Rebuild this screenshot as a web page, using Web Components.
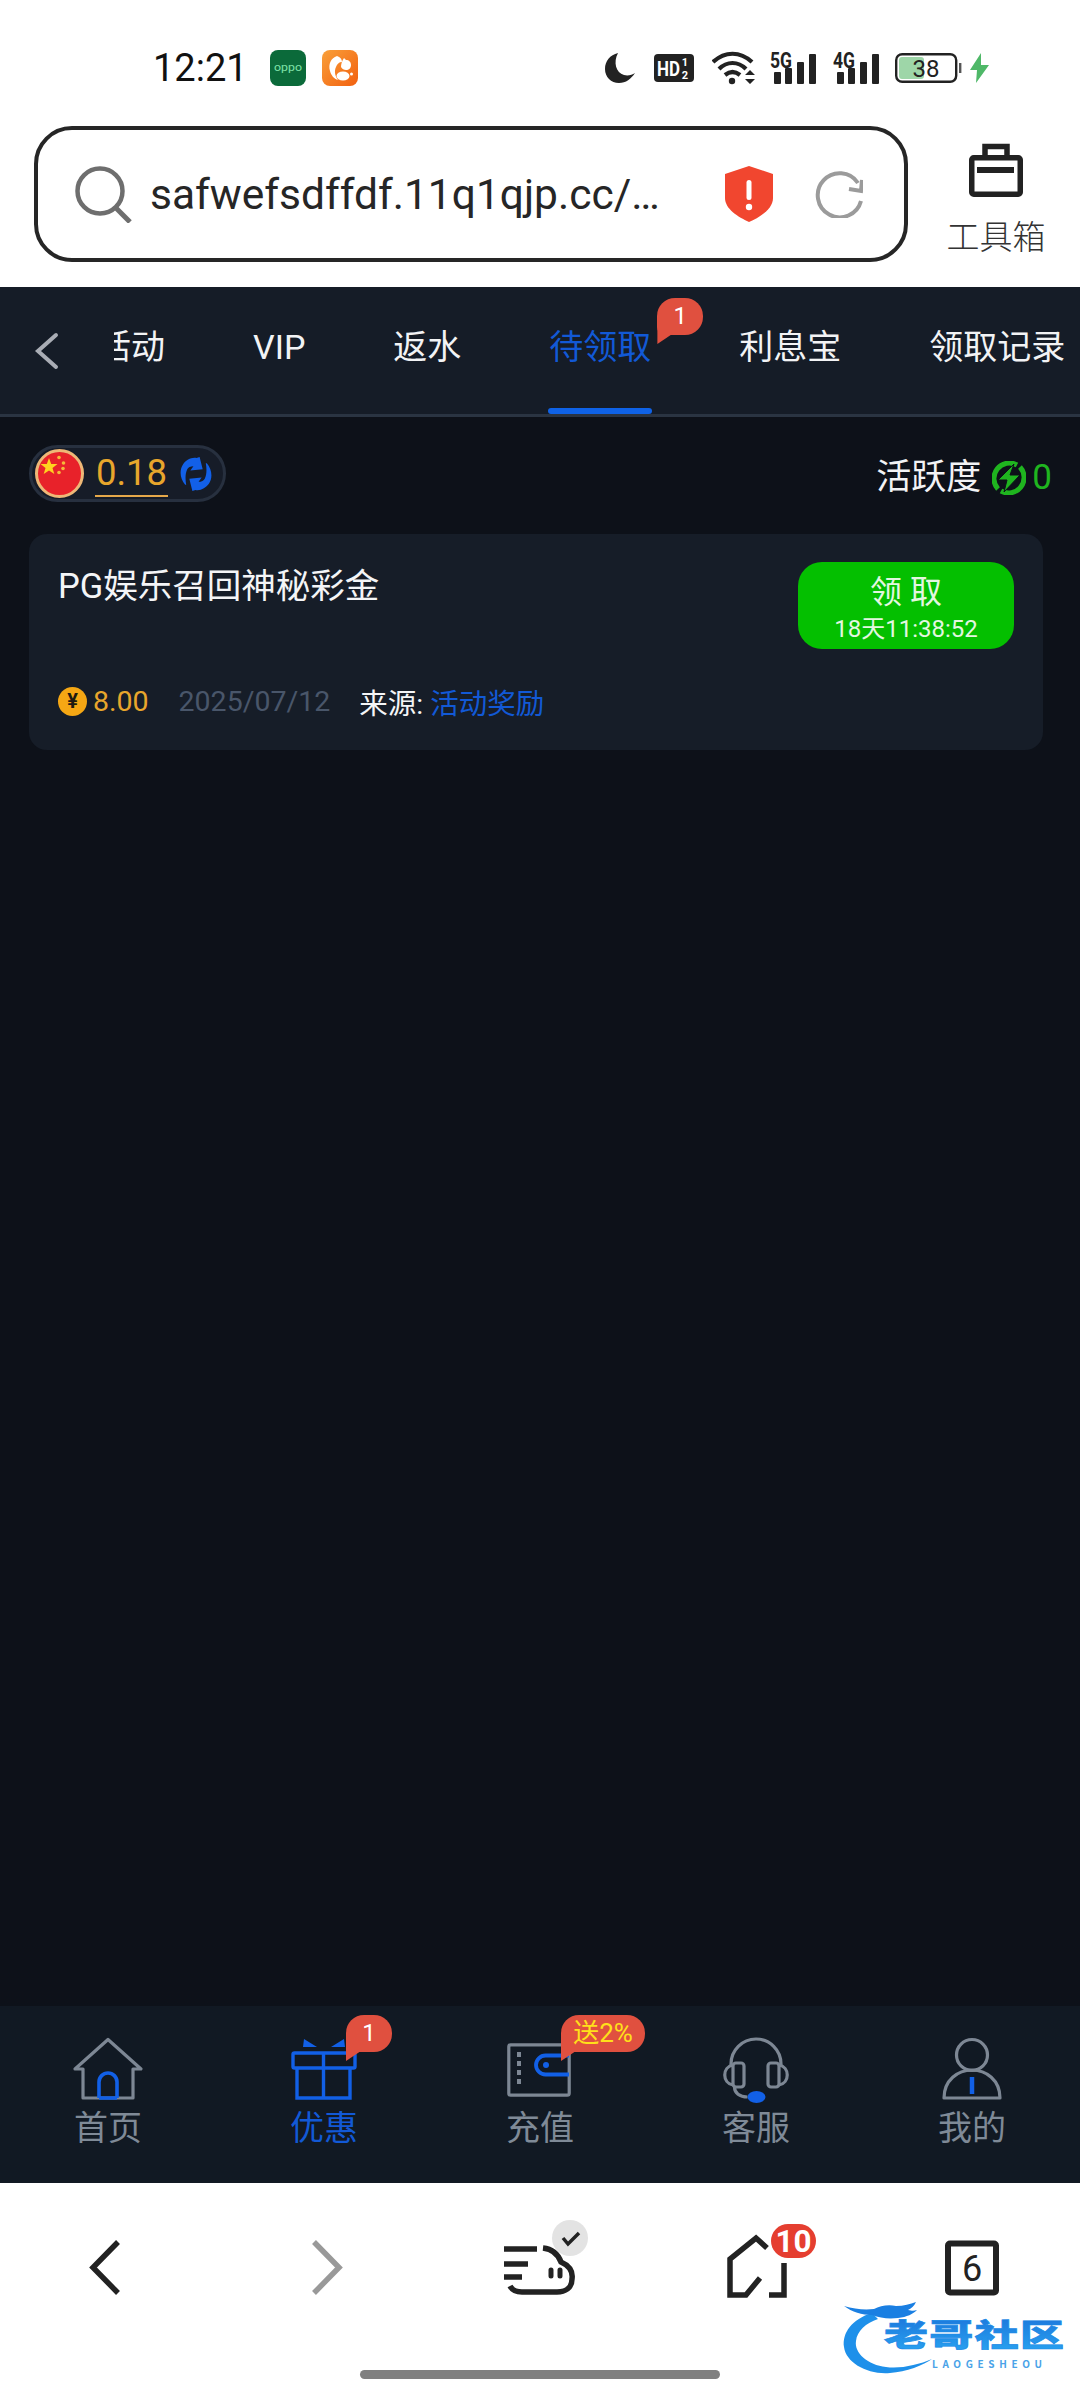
<!DOCTYPE html>
<html lang="zh">
<head>
<meta charset="utf-8">
<title>待领取</title>
<style>
	html, body {
		margin: 0;
		width: 1080px;
		height: 2400px;
		overflow: hidden;
		background: #fff;
		font-family: Roboto, "Noto Sans CJK SC", sans-serif;
	}
	body {
		display: flex;
		flex-direction: column;
	}
</style>
</head>
<body>
	<status-bar></status-bar>
	<url-bar url="safwefsdffdf.11q1qjp.cc/…"></url-bar>
	<promo-tabs>
		<tab-item>活动</tab-item>
		<tab-item>VIP</tab-item>
		<tab-item>返水</tab-item>
		<tab-item active>待领取<speech-badge slot="badge" style="left:108px;top:11px;width:46px">1</speech-badge></tab-item>
		<tab-item>利息宝</tab-item>
		<tab-item>领取记录</tab-item>
	</promo-tabs>
	<promo-page>
		<balance-pill slot="left" amount="0.18"></balance-pill>
		<activity-meter slot="right" value="0"></activity-meter>
		<reward-card title="PG娱乐召回神秘彩金" amount="8.00" date="2025/07/12" source="活动奖励" timer="18天11:38:52"></reward-card>
	</promo-page>
	<app-nav></app-nav>
	<browser-toolbar></browser-toolbar>

<script>
class StatusBar extends HTMLElement {
	connectedCallback() {
		this.attachShadow({ mode: 'open' });
		this.shadowRoot.innerHTML = `
			<style>
				:host {
					display: flex;
					align-items: center;
					justify-content: space-between;
					box-sizing: border-box;
					height: 126px;
					padding: 10px 91px 0 153px;
					background: #fff;
				}
				.left, .right {
					display: flex;
					align-items: center;
				}
				.time {
					font-size: 38px;
					color: #111;
					margin-right: 22px;
				}
				svg {
					display: block;
					flex-shrink: 0;
				}
				text {
					font-family: Roboto, sans-serif;
				}
			</style>
			<div class="left">
				<span class="time">12:21</span>
				<svg width="36" height="36" viewBox="0 0 36 36">
					<rect width="36" height="36" rx="8" fill="#0b6a3a"/>
					<text x="18" y="21" font-size="10" fill="#7fe3a8" text-anchor="middle" textLength="28" lengthAdjust="spacingAndGlyphs">oppo</text>
				</svg>
				<svg width="36" height="36" viewBox="0 0 36 36" style="margin-left:16px">
					<defs>
						<linearGradient id="uc" x1="0" y1="0" x2="1" y2="1">
							<stop offset="0" stop-color="#f9a03a"/>
							<stop offset="1" stop-color="#f2600f"/>
						</linearGradient>
					</defs>
					<rect width="36" height="36" rx="8" fill="url(#uc)"/>
					<path d="M15 6C9 8 6 14 8 21c1 4 4 8 8 9-3-4-4-9-2-13 1-3 3-5 6-5 0-3-2-5-5-6z" fill="#fff"/>
					<path d="M22 8l2 2c3 0 5 2 5 5 0 3-2 5-5 5-2 0-4-1-5-3 0-3 1-6 3-9z" fill="#fff"/>
					<ellipse cx="21" cy="26" rx="6.500" ry="4.500" fill="#fff"/>
					<circle cx="29.500" cy="24" r="1.500" fill="#fff"/>
				</svg>
			</div>
			<div class="right">
				<svg width="30" height="30" viewBox="0 0 30 30">
					<path d="M13 0C5 2 0 8 0 16c0 8 6 14 14 14 7 0 12-4 16-10-3 2-7 3-11 2C11 20 8 9 13 0z" fill="#222"/>
				</svg>
				<svg width="40" height="28" viewBox="0 0 40 28" style="margin-left:19px">
					<rect width="40" height="28" rx="4" fill="#222"/>
					<text x="3" y="22" font-size="21" font-weight="700" fill="#fff" textLength="23" lengthAdjust="spacingAndGlyphs">HD</text>
					<text x="31" y="12" font-size="11" font-weight="700" fill="#fff" text-anchor="middle">1</text>
					<text x="31" y="25" font-size="11" font-weight="700" fill="#fff" text-anchor="middle">2</text>
				</svg>
				<svg width="44" height="34" viewBox="0 0 44 34" style="margin-left:18px">
					<path d="M1 11C13 0 28 0 40 11M7 18c8-8 19-8 27 0M13 24c5-4 10-4 15 0" fill="none" stroke="#222" stroke-width="4.200"/>
					<circle cx="20" cy="30" r="3.200" fill="#222"/>
					<path d="M33 24l5-5 5 5zM33 28l5 5 5-5z" fill="#222"/>
				</svg>
				<svg width="46" height="44" viewBox="0 -6 46 44" style="margin-left:14px">
					<text x="0" y="16" font-size="22" font-weight="700" fill="#222" textLength="22" lengthAdjust="spacingAndGlyphs">5G</text>
					<rect x="4" y="20" width="7" height="12" rx="1" fill="#222"/>
					<rect x="15" y="16" width="7" height="16" rx="1" fill="#222"/>
					<rect x="27" y="10" width="7" height="22" rx="1" fill="#222"/>
					<rect x="39" y="2" width="7" height="30" rx="1" fill="#222"/>
				</svg>
				<svg width="46" height="44" viewBox="0 -6 46 44" style="margin-left:17px">
					<text x="0" y="16" font-size="22" font-weight="700" fill="#222" textLength="22" lengthAdjust="spacingAndGlyphs">4G</text>
					<rect x="4" y="20" width="7" height="12" rx="1" fill="#222"/>
					<rect x="15" y="16" width="7" height="16" rx="1" fill="#222"/>
					<rect x="27" y="10" width="7" height="22" rx="1" fill="#222"/>
					<rect x="39" y="2" width="7" height="30" rx="1" fill="#222"/>
				</svg>
				<svg width="67" height="30" viewBox="0 0 67 30" style="margin-left:16px">
					<rect x="4" y="4" width="25" height="22" rx="3" fill="#9ed6a8"/>
					<rect x="1.200" y="1.200" width="60" height="27.600" rx="6" fill="none" stroke="#222" stroke-width="2.400"/>
					<rect x="64" y="10" width="2.400" height="10" fill="#555"/>
					<text x="31" y="24" font-size="24" fill="#222" text-anchor="middle">38</text>
				</svg>
				<svg width="19" height="30" viewBox="0 0 19 30" style="margin-left:8px">
					<path d="M11 0L0 17h7L6 30l13-18h-8z" fill="#4fb868"/>
				</svg>
			</div>
		`;
	}
}
customElements.define('status-bar', StatusBar);

class UrlBar extends HTMLElement {
	connectedCallback() {
		this.attachShadow({ mode: 'open' });
		this.shadowRoot.innerHTML = `
			<style>
				:host {
					display: flex;
					height: 161px;
					box-sizing: border-box;
					padding-left: 34px;
					background: #fff;
				}
				.box {
					display: flex;
					align-items: center;
					box-sizing: border-box;
					width: 874px;
					height: 136px;
					padding: 0 41px 0 37px;
					border: 4.5px solid #262626;
					border-radius: 38px;
				}
				.url {
					margin-left: 18px;
					font-size: 42.5px;
					color: #262626;
					white-space: nowrap;
				}
				svg {
					display: block;
					flex-shrink: 0;
				}
				.tool {
					flex: 1;
					display: flex;
					flex-direction: column;
					align-items: center;
					padding-top: 17px;
					margin-left: 4px;
				}
				.tool span {
					margin-top: 23px;
					font-size: 33px;
					line-height: 36px;
					font-weight: 300;
					color: #333;
				}
			</style>
			<div class="box">
				<svg width="57" height="57" viewBox="0 0 57 57" fill="none" stroke="#6e6e6e">
					<circle cx="25" cy="25" r="22.500" stroke-width="4.500"/>
					<path d="M41 42l14 14" stroke-width="5"/>
				</svg>
				<span class="url">${this.getAttribute('url')}</span>
				<svg width="48" height="56" viewBox="0 0 48 56" style="margin-left:auto">
					<path d="M24 0l24 8v24c0 11-13 19-24 24C13 51 0 43 0 32V8z" fill="#f1462f"/>
					<rect x="21.500" y="14" width="5" height="20" rx="2.500" fill="#fff"/>
					<circle cx="24" cy="41" r="3.200" fill="#fff"/>
				</svg>
				<svg width="48" height="48" viewBox="0 0 48 48" fill="none" stroke="#9b9b9b" stroke-width="4" style="margin-left:42px">
					<path d="M46 31A22 22 0 1 1 43 13"/>
					<path d="M34 19l12 2 1-11"/>
				</svg>
			</div>
			<div class="tool">
				<svg width="54" height="54" viewBox="0 0 54 54" fill="none" stroke="#222" stroke-width="5.500">
					<rect x="2.750" y="14.750" width="48.500" height="36.500" rx="2"/>
					<path d="M16 14V3.500h22V14"/>
					<rect x="8" y="24" width="37" height="6" fill="#222" stroke="none"/>
				</svg>
				<span>工具箱</span>
			</div>
		`;
	}
}
customElements.define('url-bar', UrlBar);

class SpeechBadge extends HTMLElement {
	connectedCallback() {
		this.attachShadow({ mode: 'open' });
		this.shadowRoot.innerHTML = `
			<style>
				:host {
					position: absolute;
					display: block;
					box-sizing: border-box;
					height: 37px;
					border-radius: 18px 18px 18px 8px;
					background: #e0503f;
					color: #fff;
					font-size: 24px;
					line-height: 36px;
					text-align: center;
					white-space: nowrap;
				}
				:host::after {
					content: "";
					position: absolute;
					left: 0;
					top: 22px;
					width: 16px;
					height: 24px;
					background: #e0503f;
					clip-path: polygon(0 0, 100% 0, 100% 55%, 0 100%);
				}
				span {
					position: relative;
					z-index: 1;
				}
			</style>
			<span><slot></slot></span>
		`;
	}
}
customElements.define('speech-badge', SpeechBadge);

class PromoTabs extends HTMLElement {
	connectedCallback() {
		this.attachShadow({ mode: 'open' });
		this.shadowRoot.innerHTML = `
			<style>
				:host {
					display: flex;
					box-sizing: border-box;
					height: 130px;
					background: #151c27;
					border-bottom: 3px solid #2a3442;
				}
				.back {
					flex: 0 0 114px;
					display: flex;
					align-items: center;
					padding-left: 34px;
					box-sizing: border-box;
				}
				.strip {
					flex: 1;
					overflow: hidden;
				}
				.inner {
					display: flex;
					gap: 88px;
					margin-left: -17px;
				}
			</style>
			<div class="back">
				<svg width="26" height="38" viewBox="0 0 26 38" fill="none" stroke="#a9adb5" stroke-width="4" stroke-linecap="round">
					<path d="M22 3L4 19l18 16"/>
				</svg>
			</div>
			<div class="strip"><div class="inner"><slot></slot></div></div>
		`;
	}
}
customElements.define('promo-tabs', PromoTabs);

class TabItem extends HTMLElement {
	connectedCallback() {
		this.attachShadow({ mode: 'open' });
		this.shadowRoot.innerHTML = `
			<style>
				:host {
					position: relative;
					display: block;
					flex-shrink: 0;
					box-sizing: border-box;
					height: 127px;
					padding-top: 38px;
					font-size: 34px;
					line-height: 44px;
					color: #f2f3f5;
					white-space: nowrap;
				}
				:host([active]) {
					color: #1259d6;
				}
				:host([active])::after {
					content: "";
					position: absolute;
					left: -1px;
					right: -1px;
					bottom: 0;
					height: 6px;
					border-radius: 3px;
					background: #0f62e6;
				}
			</style>
			<slot></slot><slot name="badge"></slot>
		`;
	}
}
customElements.define('tab-item', TabItem);

class PromoPage extends HTMLElement {
	connectedCallback() {
		this.attachShadow({ mode: 'open' });
		this.shadowRoot.innerHTML = `
			<style>
				:host {
					display: block;
					flex: 1;
					box-sizing: border-box;
					padding: 28px 37px 0 29px;
					background: #0d1119;
				}
				.head {
					display: flex;
					align-items: center;
					justify-content: space-between;
					height: 57px;
					margin-bottom: 32px;
				}
			</style>
			<div class="head">
				<slot name="left"></slot>
				<slot name="right"></slot>
			</div>
			<slot></slot>
		`;
	}
}
customElements.define('promo-page', PromoPage);

class BalancePill extends HTMLElement {
	connectedCallback() {
		this.attachShadow({ mode: 'open' });
		this.shadowRoot.innerHTML = `
			<style>
				:host {
					display: flex;
					align-items: center;
					box-sizing: border-box;
					width: 197px;
					height: 57px;
					padding-left: 3px;
					border: 3px solid #27303f;
					border-radius: 29px;
					background: #161c28;
				}
				svg {
					display: block;
					flex-shrink: 0;
				}
				.amount {
					margin-left: 11px;
					width: 73px;
					height: 44px;
					border-bottom: 2.5px solid #e5a84a;
					font-size: 36.5px;
					line-height: 44px;
					color: #e8a62c;
					text-align: center;
				}
			</style>
			<svg width="49" height="49" viewBox="0 0 49 49">
				<circle cx="24.500" cy="24.500" r="23" fill="#e8222a" stroke="#eeb877" stroke-width="3"/>
				<polygon points="14,9 16.200,15 22.500,15 17.500,19 19.300,25 14,21.500 8.700,25 10.500,19 5.500,15 11.800,15" fill="#ffd21f"/>
				<circle cx="24" cy="8.500" r="1.800" fill="#f6b93a"/>
				<circle cx="28.500" cy="14" r="1.800" fill="#f6b93a"/>
				<circle cx="28" cy="19.500" r="1.800" fill="#f6b93a"/>
				<circle cx="24" cy="23.500" r="1.800" fill="#f6b93a"/>
			</svg>
			<div class="amount">${this.getAttribute('amount')}</div>
			<svg width="32" height="34" viewBox="0 0 31 33" style="margin-left:12px" fill="#1260e8">
				<path d="M5 27C0 21-1 13 3 7c3-4 8-7 13-6l3-1 3 12-12 1 3-4c-3 0-5 1-6 3-2 4-2 10-1 15z"/>
				<path d="M26 6c5 6 6 14 2 20-3 4-8 7-13 6l-3 1-3-12 12-1-3 4c3 0 5-1 6-3 2-4 2-10 1-15z"/>
			</svg>
		`;
	}
}
customElements.define('balance-pill', BalancePill);

class ActivityMeter extends HTMLElement {
	connectedCallback() {
		this.attachShadow({ mode: 'open' });
		this.shadowRoot.innerHTML = `
			<style>
				:host {
					display: flex;
					align-items: center;
					margin-top: 9px;
					margin-right: -9px;
					font-size: 35px;
					line-height: 44px;
					color: #f2f3f5;
				}
				svg {
					display: block;
					margin-left: 11px;
				}
				.value {
					margin-left: 6px;
					font-size: 35px;
					color: #1fb51f;
				}
			</style>
			活跃度
			<svg width="34" height="34" viewBox="0 0 34 34" fill="none">
				<path d="M6 28A15.500 15.500 0 0 1 25 4M28 6A15.500 15.500 0 0 1 9 30" stroke="#1fb51f" stroke-width="5"/>
				<path d="M22 3L6 19h9l-3 12 16-17h-10z" fill="#1fb51f" stroke="#0d1119" stroke-width="1"/>
			</svg>
			<span class="value">${this.getAttribute('value')}</span>
		`;
	}
}
customElements.define('activity-meter', ActivityMeter);

class RewardCard extends HTMLElement {
	connectedCallback() {
		this.attachShadow({ mode: 'open' });
		this.shadowRoot.innerHTML = `
			<style>
				:host {
					display: block;
					box-sizing: border-box;
					height: 216px;
					padding: 28px 29px 28px 29px;
					border-radius: 18px;
					background: #161d28;
				}
				.top {
					display: flex;
					align-items: flex-start;
					justify-content: space-between;
				}
				.title {
					margin-top: 2px;
					font-size: 34.5px;
					line-height: 44px;
					color: #f4f5f7;
				}
				.claim {
					display: flex;
					flex-direction: column;
					align-items: center;
					box-sizing: border-box;
					width: 216px;
					height: 87px;
					padding-top: 8px;
					border-radius: 24px;
					background: #04bf00;
					color: #e3f7e0;
				}
				.claim b {
					font-weight: 400;
					font-size: 32px;
					line-height: 44px;
				}
				.claim small {
					font-size: 24px;
					line-height: 30px;
				}
				.meta {
					display: flex;
					align-items: center;
					height: 40px;
					margin-top: 32px;
					font-size: 28.5px;
					white-space: nowrap;
				}
				.coin {
					display: flex;
					align-items: center;
					justify-content: center;
					width: 29px;
					height: 29px;
					margin-right: 6px;
					border-radius: 50%;
					background: #f5a714;
					color: #1d1a10;
					font-size: 20px;
					font-weight: 700;
				}
				.amount {
					color: #e8a62c;
					margin-right: 30px;
				}
				.date {
					color: #49566a;
					margin-right: 29px;
				}
				.source {
					color: #f4f5f7;
				}
				.source em {
					font-style: normal;
					color: #1259d6;
				}
			</style>
			<div class="top">
				<div class="title">${this.getAttribute('title')}</div>
				<div class="claim">
					<b>领 取</b>
					<small>${this.getAttribute('timer')}</small>
				</div>
			</div>
			<div class="meta">
				<span class="coin">¥</span>
				<span class="amount">${this.getAttribute('amount')}</span>
				<span class="date">${this.getAttribute('date')}</span>
				<span class="source">来源: <em>${this.getAttribute('source')}</em></span>
			</div>
		`;
	}
}
customElements.define('reward-card', RewardCard);

class NavItem extends HTMLElement {
	connectedCallback() {
		this.attachShadow({ mode: 'open' });
		this.shadowRoot.innerHTML = `
			<style>
				:host {
					position: relative;
					display: flex;
					flex-direction: column;
					align-items: center;
					padding-top: 31px;
					color: #7f8a97;
				}
				:host([active]) {
					color: #1259d6;
				}
				.label {
					margin-top: 1px;
					font-size: 34px;
					line-height: 44px;
				}
			</style>
			<slot name="icon"></slot>
			<span class="label"><slot name="label"></slot></span>
			<slot></slot>
		`;
	}
}
customElements.define('nav-item', NavItem);

class AppNav extends HTMLElement {
	connectedCallback() {
		this.attachShadow({ mode: 'open' });
		const gray = '#7d8794';
		const blue = '#1260e6';
		this.shadowRoot.innerHTML = `
			<style>
				:host {
					display: grid;
					grid-template-columns: repeat(5, 1fr);
					flex: 0 0 177px;
					background: #111923;
				}
				svg {
					display: block;
				}
			</style>
			<nav-item>
				<svg slot="icon" width="72" height="68" viewBox="0 0 72 68" fill="none" stroke-width="3.200" stroke-linejoin="round">
					<path d="M11 61V32H3L36 2.500 69 32h-8v29z" stroke="${gray}"/>
					<path d="M27 61V45a9 9 0 0 1 18 0v16M27 61h18" stroke="${blue}" stroke-width="3.600"/>
				</svg>
				<span slot="label">首页</span>
			</nav-item>
			<nav-item active>
				<svg slot="icon" width="72" height="68" viewBox="0 0 72 68" fill="none" stroke="${blue}" stroke-width="3.400">
					<rect x="5" y="16" width="62" height="15" rx="1.500"/>
					<path d="M9 31v30h53V31M35.500 16v45"/>
					<path d="M16 2l13 8H15zM56 2L43 10h14z" fill="${blue}" stroke="none"/>
				</svg>
				<span slot="label">优惠</span>
				<speech-badge style="left:130px;top:9px;width:46px">1</speech-badge>
			</nav-item>
			<nav-item>
				<svg slot="icon" width="72" height="68" viewBox="0 0 72 68" fill="none" stroke="${gray}" stroke-width="3.200">
					<rect x="4.800" y="7.800" width="60.400" height="50.400" rx="2"/>
					<path d="M15 15v34" stroke-width="4" stroke-dasharray="5 4"/>
					<path d="M65 18.500H41.500a9.500 9.500 0 0 0 0 19H65" stroke="${blue}" stroke-width="3.800"/>
					<circle cx="42" cy="28" r="3" fill="${blue}" stroke="none"/>
				</svg>
				<span slot="label">充值</span>
				<speech-badge style="left:129px;top:9px;width:84px;color:#ffe01a;font-size:26px">送2%</speech-badge>
			</nav-item>
			<nav-item>
				<svg slot="icon" width="72" height="68" viewBox="0 0 72 68" fill="none" stroke="${gray}" stroke-width="3.200">
					<path d="M11 30v-3a25 25 0 0 1 50 0v3"/>
					<rect x="13" y="26" width="11" height="24" rx="3"/>
					<rect x="48" y="26" width="11" height="24" rx="3"/>
					<path d="M13 28c-11 2-11 18 0 20M59 28c11 2 11 18 0 20"/>
					<path d="M14.500 50c0 6 5 10 13 10"/>
					<ellipse cx="36.500" cy="60" rx="9" ry="6" fill="${blue}" stroke="none"/>
				</svg>
				<span slot="label">客服</span>
			</nav-item>
			<nav-item>
				<svg slot="icon" width="72" height="68" viewBox="0 0 72 68" fill="none" stroke="${gray}" stroke-width="3.200">
					<circle cx="36" cy="18" r="15.500"/>
					<path d="M8 61c0-18 14-28 28-28s28 10 28 28z" stroke-linejoin="round"/>
					<path d="M36 40v17" stroke="${blue}" stroke-width="4.500"/>
				</svg>
				<span slot="label">我的</span>
			</nav-item>
		`;
	}
}
customElements.define('app-nav', AppNav);

class BrowserToolbar extends HTMLElement {
	connectedCallback() {
		this.attachShadow({ mode: 'open' });
		this.shadowRoot.innerHTML = `
			<style>
				:host {
					position: relative;
					display: block;
					flex: 0 0 217px;
					background: #fff;
				}
				.row {
					display: grid;
					grid-template-columns: repeat(5, 1fr);
					justify-items: center;
					padding-top: 33px;
				}
				svg {
					display: block;
				}
				text {
					font-family: Roboto, sans-serif;
				}
				.indicator {
					position: absolute;
					left: 360px;
					top: 187px;
					width: 360px;
					height: 9px;
					border-radius: 5px;
					background: #808080;
				}
			</style>
			<div class="row">
				<svg width="100" height="90" viewBox="0 0 100 90" fill="none" stroke="#222" stroke-width="5.500">
					<path d="M60 26L35 51.500 60 77"/>
				</svg>
				<svg width="100" height="90" viewBox="0 0 100 90" fill="none" stroke="#999" stroke-width="5.500">
					<path d="M40 26l25 25.500L40 77"/>
				</svg>
				<svg width="100" height="90" viewBox="0 0 100 90" fill="none" stroke="#222" stroke-width="5.500">
					<path d="M14 33h33M14 48h24M14 61h18"/>
					<path d="M53 32c9 1 15 6 18 14 9 4 12 10 11 17 0 9-7 13-15 13H32c-6 0-10-2-12-6"/>
					<path d="M61 54v6M70 54v6" stroke-linecap="round" stroke-width="5"/>
					<circle cx="80" cy="22" r="18" fill="#e3e3e3" stroke="none"/>
					<path d="M73 22l5 6 11-11" stroke-width="3.500"/>
				</svg>
				<svg width="100" height="90" viewBox="0 0 100 90" fill="none" stroke="#222" stroke-width="5.500" style="overflow:visible">
					<path d="M54 62L40 79H24V43l26-21 11 10"/>
					<path d="M63 79h15V47"/>
					<rect x="65" y="8" width="45" height="34" rx="17" fill="#e53e30" stroke="none"/>
					<text x="87.500" y="36" font-size="32" font-weight="700" fill="#fff" stroke="none" text-anchor="middle" textLength="36" lengthAdjust="spacingAndGlyphs">10</text>
				</svg>
				<svg width="100" height="90" viewBox="0 0 100 90" fill="none" stroke="#222" stroke-width="6">
					<rect x="26" y="27.500" width="48" height="49" rx="2"/>
					<text x="50" y="65" font-size="36" fill="#222" stroke="none" text-anchor="middle">6</text>
				</svg>
			</div>
			<div class="indicator"></div>
			<watermark-mark></watermark-mark>
		`;
	}
}
customElements.define('browser-toolbar', BrowserToolbar);

class WatermarkMark extends HTMLElement {
	connectedCallback() {
		this.attachShadow({ mode: 'open' });
		this.shadowRoot.innerHTML = `
			<style>
				:host {
					position: absolute;
					left: 840px;
					top: 118px;
					display: block;
					width: 228px;
					height: 76px;
				}
				svg {
					display: block;
					overflow: visible;
				}
				text {
					font-family: "Noto Sans CJK SC", sans-serif;
				}
			</style>
			<svg width="228" height="76" viewBox="0 0 228 76">
				<defs>
					<linearGradient id="wm" x1="0" y1="0" x2="0" y2="1">
						<stop offset="0" stop-color="#1a6fd8"/>
						<stop offset="1" stop-color="#2aa6f2"/>
					</linearGradient>
				</defs>
				<path d="M32 12C12 18 2 32 4 46c2 16 24 28 46 26 16-1 34-8 42-14-14 6-32 10-46 8C28 64 14 52 16 40c1-10 10-18 22-22z" fill="#1e90ea"/>
				<path d="M4 5c10 3 20 4 30 3 6-3 14-5 22-3 8 0 14-2 20-4-2 4-4 6-8 8 4 1 6 1 9 0-4 4-10 7-19 8-10 1-18 0-26-3-10 0-20-3-28-9z" fill="#1a7fe2"/>
				<text transform="translate(44 45) scale(1 .7)" font-size="44" font-weight="800" fill="url(#wm)" stroke="#1e8be6" stroke-width="1" textLength="180">老哥社区</text>
				<text x="92" y="67" font-size="10" font-weight="700" fill="#4aa3e8" textLength="110">LAOGESHEOU</text>
			</svg>
		`;
	}
}
customElements.define('watermark-mark', WatermarkMark);
</script>
</body>
</html>
